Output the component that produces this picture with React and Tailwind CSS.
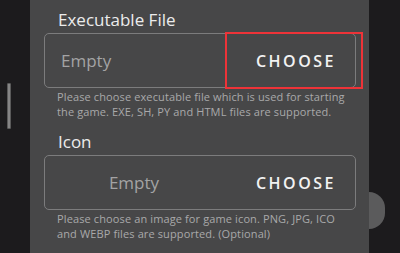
export default function App() {
  const font = { fontFamily: '"Open Sans", "Noto Sans", sans-serif' };
  return (
    <div className="w-[400px] h-[253px] flex bg-[#1c1b1d] overflow-hidden" style={font}>
      <div className="w-[30px] shrink-0 pt-[83px] pl-[7px]">
        <div className="w-[4px] h-[46px] bg-[#858585] border border-[#5a5a5a] rounded-[1px]" />
      </div>
      <div className="w-[339px] shrink-0 bg-[#474748] pl-[14px] pt-[8px]">
        <div className="pl-[14px] text-[17px] leading-[23px] text-[#ececec]">Executable File</div>
        <div className="relative mt-[2px] w-[312px] h-[55px] border-[1.5px] border-[#7c7c7d] rounded-[5px] flex items-center">
          <div className="flex-1 pl-[16px] text-[17px] text-[#a3a3a4]">Empty</div>
          <div className="w-[132px] text-center pl-[14px] text-[16px] font-semibold tracking-[2.5px] text-[#f2f2f2]">CHOOSE</div>
          <div className="absolute left-[180px] top-[-2px] w-[138px] h-[57px] border-2 border-[#ee3338]" />
        </div>
        <div className="pl-[13px] mt-[1px] text-[11px] leading-[15px] tracking-[0.12px] text-[#a9a9aa]">
          Please choose executable file which is used for starting<br />the game. EXE, SH, PY and HTML files are supported.
        </div>
        <div className="pl-[14px] mt-[11px] text-[17px] leading-[23px] text-[#ececec]">Icon</div>
        <div className="mt-[2px] w-[312px] h-[55px] border-[1.5px] border-[#7c7c7d] rounded-[5px] flex items-center">
          <div className="flex-1 text-center text-[17px] text-[#a3a3a4]">Empty</div>
          <div className="w-[132px] text-center pl-[14px] text-[16px] font-semibold tracking-[2.5px] text-[#f2f2f2]">CHOOSE</div>
        </div>
        <div className="pl-[13px] mt-[1px] text-[11px] leading-[15px] tracking-[0.12px] text-[#a9a9aa]">
          Please choose an image for game icon. PNG, JPG, ICO<br />and WEBP files are supported. (Optional)
        </div>
      </div>
      <div className="flex-1 pt-[192px]">
        <div className="w-[16px] h-[37px] rounded-r-full bg-[#5b5b5c]" />
      </div>
    </div>
  );
}
